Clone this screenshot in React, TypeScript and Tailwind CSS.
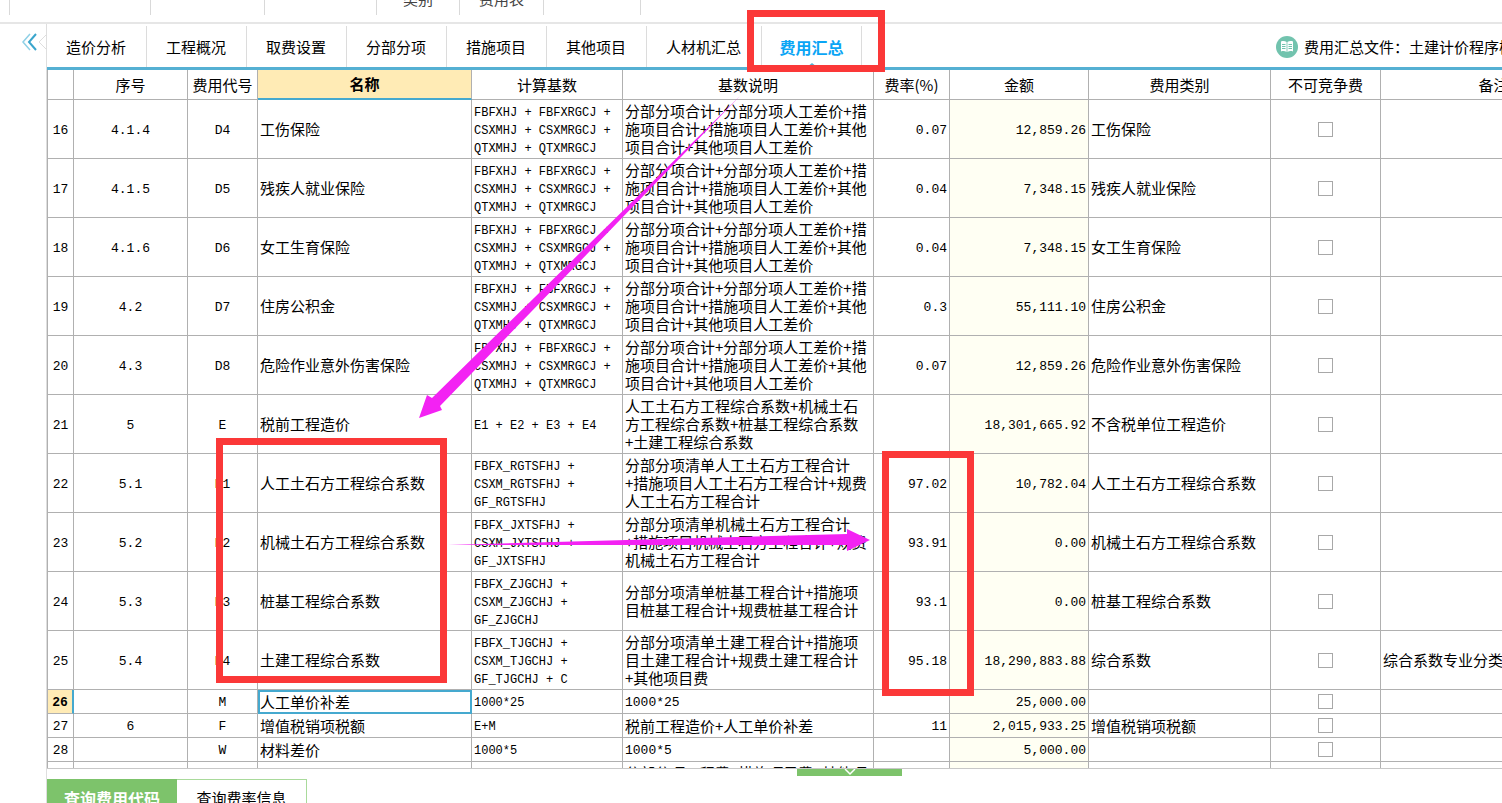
import { ReactNode } from 'react'

interface FeeRow {
  no: number
  seq?: string
  code?: string
  name?: string
  formula?: string[]
  desc?: string[]
  rate?: string
  amount?: string
  category?: string
  note?: string
}

const insuranceFormula = ['FBFXHJ + FBFXRGCJ +', 'CSXMHJ + CSXMRGCJ +', 'QTXMHJ + QTXMRGCJ']
const insuranceDesc = ['分部分项合计+分部分项人工差价+措', '施项目合计+措施项目人工差价+其他', '项目合计+其他项目人工差价']

const rows: FeeRow[] = [
  { no: 16, seq: '4.1.4', code: 'D4', name: '工伤保险', formula: insuranceFormula, desc: insuranceDesc, rate: '0.07', amount: '12,859.26', category: '工伤保险' },
  { no: 17, seq: '4.1.5', code: 'D5', name: '残疾人就业保险', formula: insuranceFormula, desc: insuranceDesc, rate: '0.04', amount: '7,348.15', category: '残疾人就业保险' },
  { no: 18, seq: '4.1.6', code: 'D6', name: '女工生育保险', formula: insuranceFormula, desc: insuranceDesc, rate: '0.04', amount: '7,348.15', category: '女工生育保险' },
  { no: 19, seq: '4.2', code: 'D7', name: '住房公积金', formula: insuranceFormula, desc: insuranceDesc, rate: '0.3', amount: '55,111.10', category: '住房公积金' },
  { no: 20, seq: '4.3', code: 'D8', name: '危险作业意外伤害保险', formula: insuranceFormula, desc: insuranceDesc, rate: '0.07', amount: '12,859.26', category: '危险作业意外伤害保险' },
  {
    no: 21, seq: '5', code: 'E', name: '税前工程造价',
    formula: ['E1 + E2 + E3 + E4'],
    desc: ['人工土石方工程综合系数+机械土石', '方工程综合系数+桩基工程综合系数', '+土建工程综合系数'],
    amount: '18,301,665.92', category: '不含税单位工程造价',
  },
  {
    no: 22, seq: '5.1', code: 'E1', name: '人工土石方工程综合系数',
    formula: ['FBFX_RGTSFHJ +', 'CSXM_RGTSFHJ +', 'GF_RGTSFHJ'],
    desc: ['分部分项清单人工土石方工程合计', '+措施项目人工土石方工程合计+规费', '人工土石方工程合计'],
    rate: '97.02', amount: '10,782.04', category: '人工土石方工程综合系数',
  },
  {
    no: 23, seq: '5.2', code: 'E2', name: '机械土石方工程综合系数',
    formula: ['FBFX_JXTSFHJ +', 'CSXM_JXTSFHJ +', 'GF_JXTSFHJ'],
    desc: ['分部分项清单机械土石方工程合计', '+措施项目机械土石方工程合计+规费', '机械土石方工程合计'],
    rate: '93.91', amount: '0.00', category: '机械土石方工程综合系数',
  },
  {
    no: 24, seq: '5.3', code: 'E3', name: '桩基工程综合系数',
    formula: ['FBFX_ZJGCHJ +', 'CSXM_ZJGCHJ +', 'GF_ZJGCHJ'],
    desc: ['分部分项清单桩基工程合计+措施项', '目桩基工程合计+规费桩基工程合计'],
    rate: '93.1', amount: '0.00', category: '桩基工程综合系数',
  },
  {
    no: 25, seq: '5.4', code: 'E4', name: '土建工程综合系数',
    formula: ['FBFX_TJGCHJ +', 'CSXM_TJGCHJ +', 'GF_TJGCHJ + C'],
    desc: ['分部分项清单土建工程合计+措施项', '目土建工程合计+规费土建工程合计', '+其他项目费'],
    rate: '95.18', amount: '18,290,883.88', category: '综合系数', note: '综合系数专业分类',
  },
  { no: 26, code: 'M', name: '人工单价补差', formula: ['1000*25'], desc: ['1000*25'], amount: '25,000.00' },
  { no: 27, seq: '6', code: 'F', name: '增值税销项税额', formula: ['E+M'], desc: ['税前工程造价+人工单价补差'], rate: '11', amount: '2,015,933.25', category: '增值税销项税额' },
  { no: 28, code: 'W', name: '材料差价', formula: ['1000*5'], desc: ['1000*5'], amount: '5,000.00' },
]

const SELECTED = 26

const tabs = ['造价分析', '工程概况', '取费设置', '分部分项', '措施项目', '其他项目', '人材机汇总']

const monoFont = "pt-[3px] font-['Liberation_Mono','Noto_Sans_CJK_SC',monospace]"
const mono = `${monoFont} text-[13px]`
const cell = 'border-r border-b border-[#b0b0b0] px-[2px]'

function Th({ children }: { children?: ReactNode }) {
  return <th className="border-r border-b border-[#b0b0b0] font-normal">{children}</th>
}

function Lines({ lines = [] }: { lines?: string[] }) {
  return (
    <>
      {lines.map((line, i) => (
        <div key={i} className="whitespace-nowrap">{line}</div>
      ))}
    </>
  )
}

function TopStrip() {
  return (
    <div className="flex h-6 shrink-0 items-end overflow-hidden border-b-2 border-[#e6e6e6] pb-[7px] pl-[9px]">
      <div className="flex h-10 items-end border-l border-[#d9d9d9] text-[#444]">
        <div className="h-10 w-[141px] border-r border-[#d9d9d9]" />
        <div className="h-10 w-[114px] border-r border-[#d9d9d9]" />
        <div className="h-10 w-[112px] border-r border-[#d9d9d9]" />
        <div className="flex h-10 w-[83px] items-end justify-center border-r border-[#d9d9d9] pb-[7px]">类别</div>
        <div className="flex h-10 w-[84px] items-end justify-center border-r border-[#d9d9d9] pb-[7px]">费用表</div>
        <div className="h-10 w-[97px] border-r border-[#d9d9d9]" />
      </div>
    </div>
  )
}

function TabBar() {
  return (
    <div className="flex h-[46px] shrink-0 items-stretch border-b-[3px] border-[#55b0d3]">
      <nav className="flex shrink-0 items-stretch pt-[2px]">
        {tabs.map((tab) => (
          <button key={tab} className="border-r border-[#dcdcdc] pr-5 pl-[19px] whitespace-nowrap">
            {tab}
          </button>
        ))}
        <button className="relative w-[100px] border-r border-[#dcdcdc] text-base font-bold whitespace-nowrap text-[#0aa5f5]">
          费用汇总
          <svg className="absolute bottom-0 left-[45px]" width="10" height="4" viewBox="0 0 10 4">
            <path d="M0 4 5 0l5 4z" fill="#55b0d3" />
          </svg>
        </button>
      </nav>
      <div className="ml-auto flex w-[227px] shrink-0 items-center gap-[5px] overflow-hidden pt-[2px] whitespace-nowrap">
        <svg className="shrink-0" width="24" height="24" viewBox="0 0 24 24">
          <circle cx="12" cy="12" r="11" fill="#72c3ae" />
          <path d="M6 6.500c2-.8 4-.6 5.600.5v10c-1.600-1-3.600-1.200-5.600-.5zM18 6.500c-2-.8-4-.6-5.600.5v10c1.600-1 3.600-1.200 5.600-.5z" fill="#fff" />
          <path d="M7 9.500h3.500M7 11.500h3.500M7 13.500h3.500M13.500 9.500H17M13.500 11.500H17M13.500 13.500H17" stroke="#72c3ae" />
        </svg>
        <span>费用汇总文件：土建计价程序模板</span>
      </div>
    </div>
  )
}

function FeeTable() {
  return (
    <table className="w-[1560px] table-fixed border-separate border-spacing-0 border-l border-[#b0b0b0]">
      <colgroup>
        <col className="w-[26px]" />
        <col className="w-[114px]" />
        <col className="w-[70px]" />
        <col className="w-[214px]" />
        <col className="w-[151px]" />
        <col className="w-[251px]" />
        <col className="w-[76px]" />
        <col className="w-[139px]" />
        <col className="w-[182px]" />
        <col className="w-[110px]" />
        <col />
      </colgroup>
      <thead>
        <tr className="h-[30px]">
          <Th />
          <Th>序号</Th>
          <Th>费用代号</Th>
          <th className="border-r border-b-2 border-r-[#b0b0b0] border-b-[#45a9cf] bg-[#ffebb5] font-bold">名称</th>
          <Th>计算基数</Th>
          <Th>基数说明</Th>
          <Th>费率(%)</Th>
          <Th>金额</Th>
          <Th>费用类别</Th>
          <Th>不可竞争费</Th>
          <Th>备注</Th>
        </tr>
      </thead>
      <tbody>
        {rows.map((row) => {
          const selected = row.no === SELECTED
          const plainDesc = row.desc?.[0].startsWith('1000')
          return (
            <tr key={row.no} className={row.no < SELECTED ? 'h-[59px]' : 'h-6'}>
              <td
                className={`border-b border-b-[#b0b0b0] text-center ${mono} ${
                  selected ? 'border-r-2 border-r-[#45a9cf] bg-[#ffebb5] font-bold' : 'border-r border-r-[#b0b0b0]'
                }`}
              >
                {row.no}
              </td>
              <td className={`${cell} text-center ${mono}`}>{row.seq}</td>
              <td className={`${cell} text-center ${mono}`}>{row.code}</td>
              <td className={selected ? 'border-2 border-[#45a9cf]' : cell}>{row.name}</td>
              <td className={`${cell} ${monoFont} text-[12px]`}><Lines lines={row.formula} /></td>
              <td className={plainDesc ? `${cell} ${mono}` : cell}><Lines lines={row.desc} /></td>
              <td className={`${cell} text-right ${mono}`}>{row.rate}</td>
              <td className={`${cell} bg-[#fffff3] text-right ${mono}`}>{row.amount}</td>
              <td className={cell}>{row.category}</td>
              <td className={cell}>
                <input
                  type="checkbox"
                  aria-label={`${row.name} 不可竞争费`}
                  className="mx-auto block size-[15px] appearance-none border border-[#a8a8a8] bg-white"
                />
              </td>
              <td className={`${cell} whitespace-nowrap`}>{row.note}</td>
            </tr>
          )
        })}
        <tr className="h-[59px]">
          <td className={cell} />
          <td className={cell} />
          <td className={cell} />
          <td className={cell} />
          <td className={cell} />
          <td className={cell}><Lines lines={['分部分项工程费+措施项目费+其他项', '目费+规费+税金', '+材料差价']} /></td>
          <td className={cell} />
          <td className={`${cell} bg-[#fffff3]`} />
          <td className={cell} />
          <td className={cell} />
          <td className={cell} />
        </tr>
      </tbody>
    </table>
  )
}

// Red frames and arrows drawn over the window
function Annotations() {
  return (
    <div className="pointer-events-none absolute inset-0">
      <div className="absolute top-[10px] left-[747px] h-[62px] w-[138px] border-[7px] border-[#fb3838]" />
      <div className="absolute top-[438px] left-[216px] h-[245px] w-[231px] border-[7px] border-[#fb3838]" />
      <div className="absolute top-[451px] left-[882px] h-[245px] w-[92px] border-[7px] border-[#fb3838]" />
      <svg className="absolute top-0 left-0" width="900" height="600" viewBox="0 0 900 600" fill="#f322f3">
        <path d="M740 96 432 398 427 395 419 418 442 410 440 406z" />
        <path d="M448 545 847 534V529L870 540 847 551V545z" />
      </svg>
    </div>
  )
}

export default function App() {
  return (
    <div className="relative flex h-screen flex-col overflow-hidden bg-white font-['Noto_Sans_CJK_SC',sans-serif] text-[15px] leading-[18px] text-black">
      <TopStrip />
      <div className="flex min-h-0 flex-1">
        <aside className="w-[46px] shrink-0">
          <button aria-label="收起" className="mt-[9px] ml-[21px] block">
            <svg width="26" height="18" viewBox="0 0 26 18" fill="none">
              <path d="M9 1 2 9l7 8" stroke="#8fd0e6" strokeWidth="1.500" />
              <path d="M15 1 8 9l7 8" stroke="#3aa5cc" strokeWidth="2" />
              <path d="M25 2 18 9l7 7" stroke="#dedede" />
            </svg>
          </button>
        </aside>
        <main className="flex min-w-0 flex-1 flex-col border-l border-[#dedede]">
          <TabBar />
          <div className="min-h-0 flex-1 overflow-hidden border-b border-[#c8c8c8]">
            <FeeTable />
          </div>
          <div className="h-[34px] shrink-0 overflow-hidden">
            <button aria-label="展开" className="ml-[750px] flex h-[7px] w-[105px] justify-center bg-[#7dc36b]">
              <svg width="12" height="7" viewBox="0 0 12 7" fill="none">
                <path d="M1 0 6 5l5-5" stroke="#fff" strokeWidth="1.500" />
              </svg>
            </button>
            <div className="mt-[3px] flex">
              <button className="h-[38px] w-[130px] bg-[#7dc36b] text-base font-bold text-white">查询费用代码</button>
              <button className="h-[38px] w-[130px] border border-l-0 border-[#a9da9b]">查询费率信息</button>
            </div>
          </div>
        </main>
      </div>
      <Annotations />
    </div>
  )
}
